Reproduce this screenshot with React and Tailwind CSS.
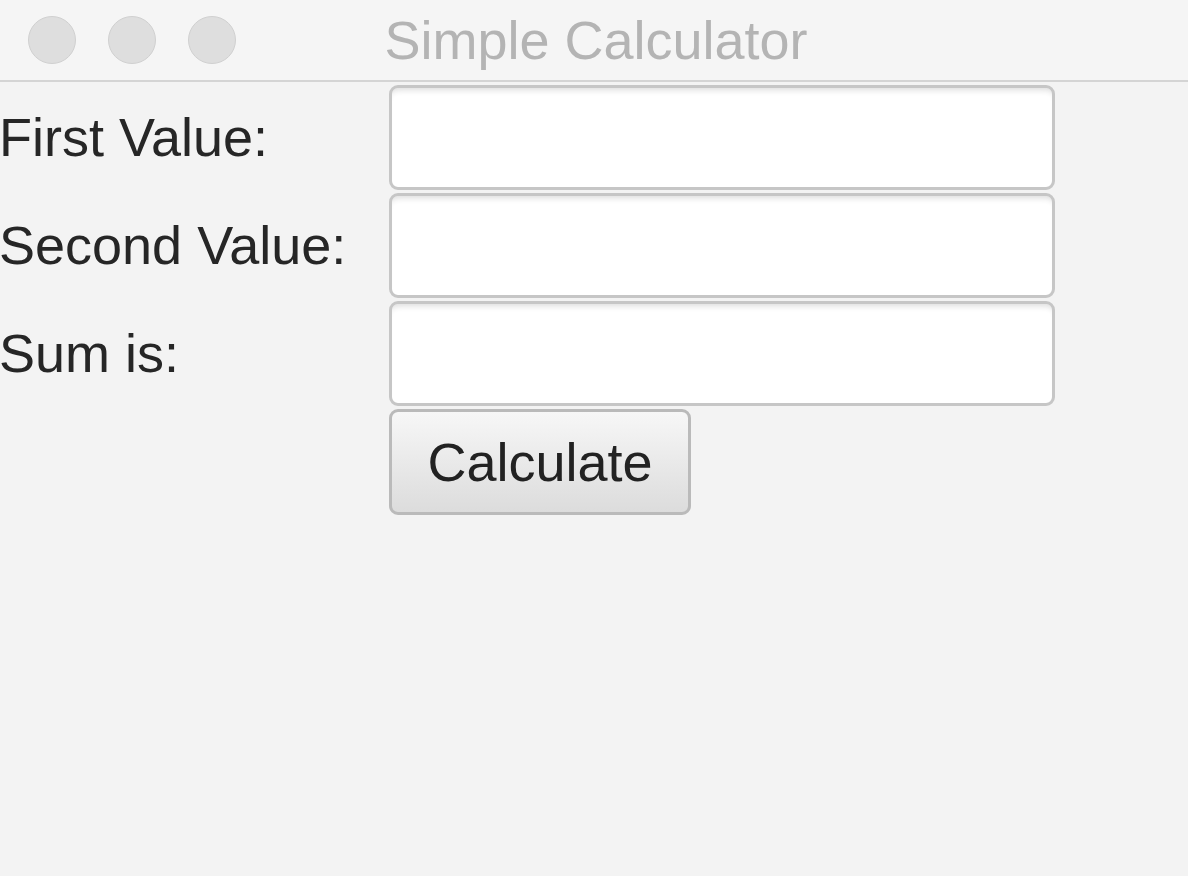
export default function App() {
  const rows = ['First Value:', 'Second Value:', 'Sum is:'];
  return (
    <div className="min-h-screen bg-[#f3f3f3] font-['Liberation_Sans',Arial,sans-serif] text-[#262626]">
      <div className="relative h-[82px] bg-[#f5f5f5] border-b-2 border-[#d4d4d4] flex items-center pl-[28px] gap-[32px]">
        <span className="w-[48px] h-[48px] rounded-full bg-[#dedede] border border-[#d0d0d0]" />
        <span className="w-[48px] h-[48px] rounded-full bg-[#dedede] border border-[#d0d0d0]" />
        <span className="w-[48px] h-[48px] rounded-full bg-[#dedede] border border-[#d0d0d0]" />
        <div className="absolute inset-x-0 top-0 h-[80px] flex items-center justify-center pl-[4px] text-[54px] text-[#b4b4b4] leading-none">
          Simple Calculator
        </div>
      </div>

      <div className="grid grid-cols-[389px_666px] gap-y-[3px] pt-[3px]">
        {rows.map((label) => (
          <div key={label} className="contents">
            <div className="flex items-center text-[54px] leading-none -ml-[1px] -mt-[2px]">{label}</div>
            <input
              type="text"
              className="h-[105px] w-full rounded-[9px] border-[3px] border-[#c6c6c6] bg-white shadow-[inset_0_7px_6px_-5px_rgba(0,0,0,0.14)] outline-none"
            />
          </div>
        ))}
        <div />
        <div>
          <button className="h-[106px] w-[302px] rounded-[9px] border-[3px] border-[#bababa] bg-gradient-to-b from-[#f7f7f7] to-[#dcdcdc] text-[54px] leading-none text-[#222]">
            Calculate
          </button>
        </div>
      </div>
    </div>
  );
}
